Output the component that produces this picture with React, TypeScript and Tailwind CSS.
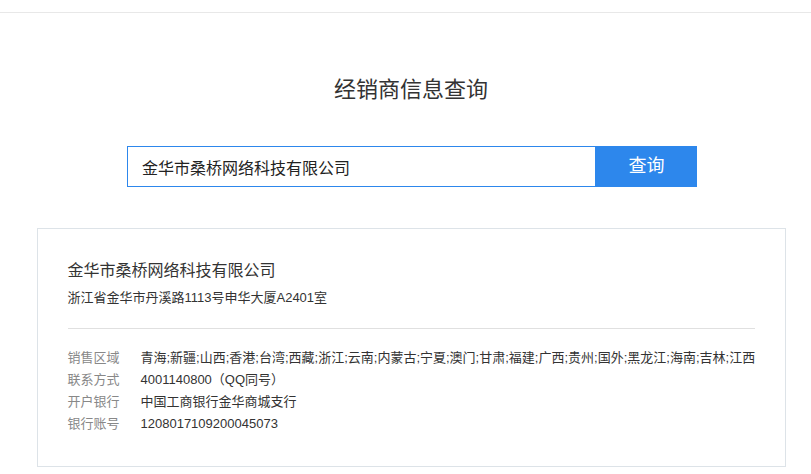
import React from "react";

const font = { fontFamily: '"Liberation Sans", "Noto Sans CJK SC", sans-serif' };

export default function App() {
  const rows: [string, string][] = [
    [
      "销售区域",
      "青海;新疆;山西;香港;台湾;西藏;浙江;云南;内蒙古;宁夏;澳门;甘肃;福建;广西;贵州;国外;黑龙江;海南;吉林;江西",
    ],
    ["联系方式", "4001140800（QQ同号）"],
    ["开户银行", "中国工商银行金华商城支行"],
    ["银行账号", "1208017109200045073"],
  ];
  return (
    <div className="min-h-[474px] bg-white text-[#333]" style={font}>
      <div className="h-[13px] border-b border-[#e8e8e8]" />
      <div className="flex flex-col items-center pl-[11px]">
        <h1 className="mt-[62px] text-[22px] leading-[30px] text-[#333] font-normal">经销商信息查询</h1>
        <div className="mt-[41px] flex h-[41px] self-start ml-[116px]">
          <input
            className="w-[469px] h-full border border-[#2d87ec] px-[14px] text-[16px] text-[#222] outline-none"
            style={font}
            defaultValue="金华市桑桥网络科技有限公司"
          />
          <button className="w-[101px] h-full bg-[#2d87ec] text-white text-[18px]" style={font}>
            查询
          </button>
        </div>
        <div className="mt-[41px] w-[749px] border border-[#dde3e8] px-[30px] pt-[30px] pb-[31px]">
          <div className="text-[16px] leading-[24px] text-[#333]">金华市桑桥网络科技有限公司</div>
          <div className="mt-[5px] text-[13px] leading-[20px] text-[#333]">浙江省金华市丹溪路1113号申华大厦A2401室</div>
          <div className="mt-[20px] h-px w-[687px] bg-[#e0e0e0]" />
          <div className="mt-[18px] flex flex-col">
            {rows.map(([k, v]) => (
              <div key={k} className="flex text-[13px] leading-[22px] whitespace-nowrap">
                <span className="w-[73px] shrink-0 text-[#888]">{k}</span>
                <span className="text-[#333]">{v}</span>
              </div>
            ))}
          </div>
        </div>
      </div>
    </div>
  );
}
